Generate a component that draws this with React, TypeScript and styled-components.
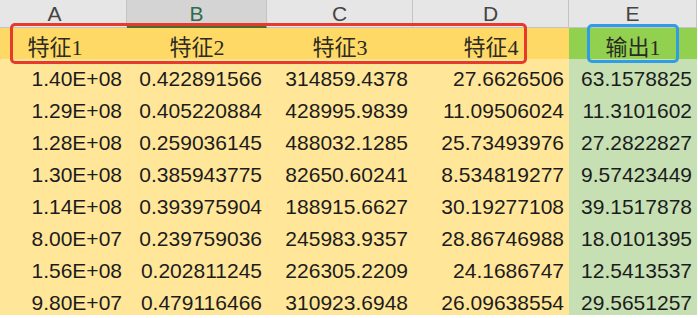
import { styled, createGlobalStyle } from "styled-components";

const GlobalStyle = createGlobalStyle`
  body {
    margin: 0;
    background: #ffffff;
    overflow: hidden;
  }
`;

const COLUMNS = "144px 140px 146px 156px 128px";

const Sheet = styled.div`
  position: relative;
  margin-left: -17px;
  width: max-content;
  font-family: "Liberation Sans", Arial, sans-serif;
`;

const Row = styled.div<{ $height: number }>`
  display: grid;
  grid-template-columns: ${COLUMNS};
  height: ${(props) => props.$height}px;
`;

const ColHeader = styled.div<{ $selected?: boolean }>`
  display: flex;
  align-items: flex-end;
  justify-content: center;
  box-sizing: border-box;
  padding-bottom: ${(props) => (props.$selected ? "0" : "1px")};
  font-size: 21px;
  line-height: 24px;
  color: ${(props) => (props.$selected ? "#2f6b4c" : "#444444")};
  background: ${(props) => (props.$selected ? "#d4d4d4" : "#e6e6e6")};
  border-right: 1px solid #c4c4c4;
  border-bottom: ${(props) =>
    props.$selected ? "2px solid #4a6b2e" : "1px solid #c4c4c4"};
`;

const LabelCell = styled.div<{ $output?: boolean }>`
  display: flex;
  align-items: center;
  justify-content: center;
  padding-top: 1px;
  font-family: "Liberation Serif", "Noto Sans CJK SC", serif;
  font-size: 22px;
  color: #2b2b22;
  background: ${(props) => (props.$output ? "#92d050" : "#ffd966")};
`;

const DataCell = styled.div<{ $output?: boolean }>`
  display: flex;
  align-items: flex-end;
  justify-content: flex-end;
  padding-right: 5px;
  font-size: 21px;
  line-height: 24px;
  color: #1c1c1c;
  background: ${(props) => (props.$output ? "#c6e0b4" : "#ffe699")};
`;

const Highlight = styled.div<{ $color: string }>`
  position: absolute;
  box-sizing: border-box;
  border: 3px solid ${(props) => props.$color};
  border-radius: 5px;
  pointer-events: none;
`;

const letters = ["A", "B", "C", "D", "E"];
const labels = ["特征1", "特征2", "特征3", "特征4", "输出1"];

const rows = [
  ["1.40E+08", "0.422891566", "314859.4378", "27.6626506", "63.1578825"],
  ["1.29E+08", "0.405220884", "428995.9839", "11.09506024", "11.3101602"],
  ["1.28E+08", "0.259036145", "488032.1285", "25.73493976", "27.2822827"],
  ["1.30E+08", "0.385943775", "82650.60241", "8.534819277", "9.57423449"],
  ["1.14E+08", "0.393975904", "188915.6627", "30.19277108", "39.1517878"],
  ["8.00E+07", "0.239759036", "245983.9357", "28.86746988", "18.0101395"],
  ["1.56E+08", "0.202811245", "226305.2209", "24.1686747", "12.5413537"],
  ["9.80E+07", "0.479116466", "310923.6948", "26.09638554", "29.5651257"],
];

const App = () => {
  return (
    <>
      <GlobalStyle />
      <Sheet>
        <Row $height={28}>
          {letters.map((l) => (
            <ColHeader key={l} $selected={l === "B"}>
              {l}
            </ColHeader>
          ))}
        </Row>
        <Row $height={31}>
          {labels.map((label, i) => (
            <LabelCell key={label} $output={i === 4}>
              {label}
            </LabelCell>
          ))}
        </Row>
        {rows.map((row, r) => (
          <Row key={r} $height={32}>
            {row.map((value, i) => (
              <DataCell key={i} $output={i === 4}>
                {value}
              </DataCell>
            ))}
          </Row>
        ))}
        <Highlight
          $color="#e63a2c"
          style={{ left: 27, top: 23, width: 517, height: 41 }}
        />
        <Highlight
          $color="#2e9de6"
          style={{ left: 604, top: 24, width: 92, height: 39 }}
        />
      </Sheet>
    </>
  );
};

export default App;
